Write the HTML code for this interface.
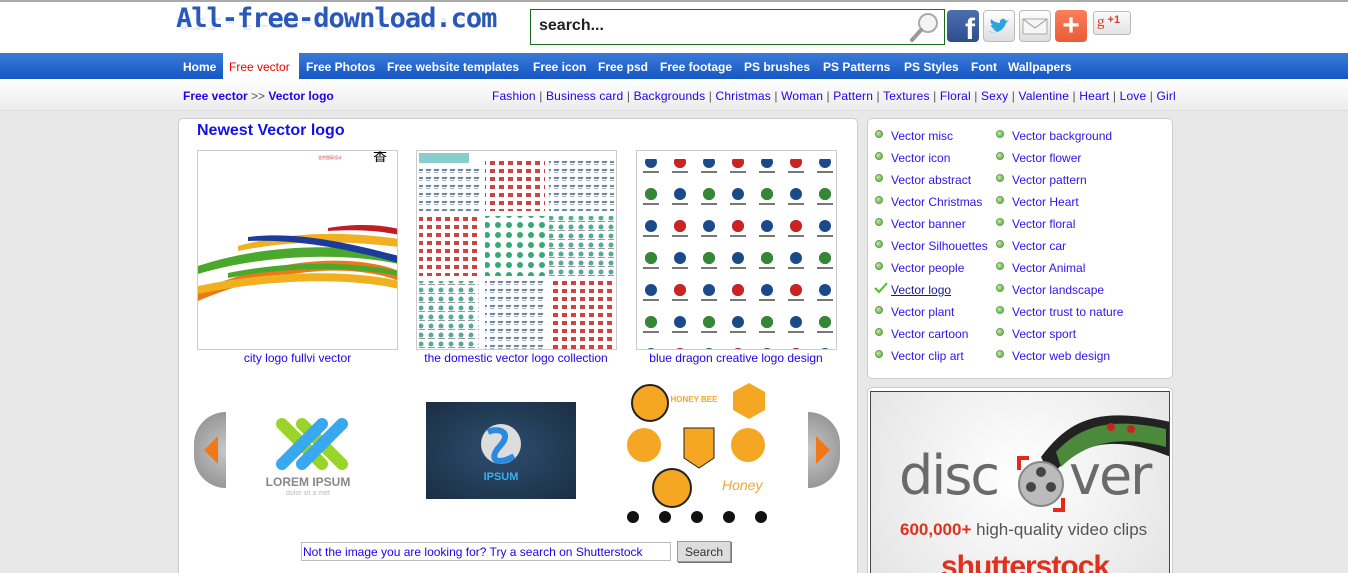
<!DOCTYPE html>
<html style="width:1348px;height:573px;overflow:hidden"><head><meta charset="utf-8">
<style>
*{margin:0;padding:0;box-sizing:border-box}
body{width:1348px;height:573px;overflow:hidden;background:#e8e8e8;font-family:"Liberation Sans",Arial,sans-serif;font-size:12px;position:relative}
.abs{position:absolute}
a{color:#2200ee;text-decoration:none}
#hdr{left:0;top:0;width:1348px;height:53px;background:#fff;border-top:2px solid #aaa}
#logo{left:176px;top:4px;font-family:"DejaVu Sans Mono","Liberation Mono",monospace;font-size:27px;font-weight:bold;color:#2a58b8;letter-spacing:-1px;line-height:30px}
#logo2{left:176px;top:32px;font-family:"DejaVu Sans Mono",monospace;font-size:27px;font-weight:bold;color:#2a58b8;opacity:.12;letter-spacing:-1px;transform:scaleY(-.6);transform-origin:top;line-height:30px}
#search{left:530px;top:9px;width:415px;height:36px;border:1px solid #1a6e1a;background:#fff;font-size:16px;font-weight:bold;color:#222;padding:7px 8px}
#nav{left:0;top:53px;width:1348px;height:26px;background:linear-gradient(#3a7bd8,#1556c4)}
#nav span{position:absolute;top:7px;color:#fff;font-weight:bold;font-size:12px}
#sub{left:0;top:79px;width:1348px;height:32px;background:linear-gradient(#fff,#ececec);border-bottom:1px solid #ddd}
#main{left:178px;top:118px;width:680px;height:470px;background:#fff;border:1px solid #ccc;border-radius:5px}
#side{left:867px;top:118px;width:306px;height:261px;background:#fff;border:1px solid #ccc;border-radius:5px}
#ad{left:867px;top:387px;width:306px;height:200px;background:#fff;border:1px solid #ccc;border-radius:5px}
.it{position:absolute;font-size:12px;color:#3311ee;white-space:nowrap}
.dot{position:absolute;width:8px;height:8px;border-radius:50%;background:radial-gradient(circle at 35% 35%,#bff0a0,#4aa82a);border:1px solid #6a9a5a}
.th{position:absolute;top:150px;width:201px;height:200px;border:1px solid #ccc;background:#fff;overflow:hidden}
.cap{position:absolute;top:351px;font-size:12px;color:#2200ee;text-align:center}
.arr{position:absolute;top:412px;width:32px;height:76px;background:radial-gradient(circle at 100% 50%,#c8c8c8,#888);}
</style></head><body>
<div id="hdr" class="abs"></div>
<div id="logo" class="abs">All-free-download.com</div>
<div id="logo2" class="abs">All-free-download.com</div>
<div id="search" class="abs">search...</div>
<svg class="abs" style="left:908px;top:11px" width="34" height="32"><circle cx="20" cy="12" r="9" fill="#f4f4f4" stroke="#aaa" stroke-width="2"/><line x1="13" y1="19" x2="4" y2="29" stroke="#999" stroke-width="4" stroke-linecap="round"/></svg>
<div class="abs" style="left:947px;top:10px;width:32px;height:32px;border-radius:4px;background:linear-gradient(#4d6fb0,#2d4d8e);color:#fff;font:bold 30px 'Liberation Sans';text-align:right;padding-right:4px;line-height:40px;overflow:hidden">f</div>
<div class="abs" style="left:983px;top:10px;width:32px;height:32px;border-radius:4px;background:linear-gradient(#fff,#ddd);border:1px solid #bbb"><svg width="30" height="30"><path d="M5 20c6 3 14 1 17-8l3-3-3 1c-1-3-5-3-6 0l0 2c-4 0-7-2-9-4-1 3 0 5 2 6l-2 0c0 2 2 4 4 4l-2 0c1 1 2 2 4 2-3 2-6 2-8 0z" fill="#2aa4e0"/></svg></div>
<div class="abs" style="left:1019px;top:10px;width:32px;height:32px;border-radius:4px;background:linear-gradient(#fff,#ddd);border:1px solid #bbb"><svg width="30" height="30"><path d="M3 8h24v15H3z" fill="#f6f6f6" stroke="#aaa"/><path d="M3 8l12 9 12-9" fill="none" stroke="#999"/></svg></div>
<div class="abs" style="left:1055px;top:10px;width:32px;height:32px;border-radius:4px;background:linear-gradient(#f8805a,#ec5a38);color:#fff;font:bold 30px 'Liberation Sans';text-align:center;line-height:31px">+</div>
<div class="abs" style="left:1093px;top:11px;width:38px;height:24px;border-radius:3px;background:linear-gradient(#fafafa,#e4e4e4);border:1px solid #bbb;color:#d04030;font:15px 'Liberation Serif';padding:2px 3px">g<span style="font:bold 11px 'Liberation Sans';vertical-align:3px"> +1</span></div>

<div id="nav" class="abs">
<div class="abs" style="left:223px;top:0;width:76px;height:26px;background:#fff"></div>
<span style="left:183px">Home</span><span style="left:229px;color:#ee0000;font-weight:normal">Free vector</span><span style="left:306px">Free Photos</span><span style="left:387px">Free website templates</span><span style="left:533px">Free icon</span><span style="left:598px">Free psd</span><span style="left:660px">Free footage</span><span style="left:744px">PS brushes</span><span style="left:823px">PS Patterns</span><span style="left:904px">PS Styles</span><span style="left:971px">Font</span><span style="left:1008px">Wallpapers</span>
</div>
<div id="sub" class="abs">
<div class="abs" style="left:183px;top:10px;font-weight:bold;color:#2200ee">Free vector <span style="color:#555;font-weight:normal">&gt;&gt;</span> Vector logo</div>
<div class="abs" style="left:492px;top:10px;color:#2200ee;white-space:nowrap;letter-spacing:.15px">Fashion <span style="color:#555">|</span> Business card <span style="color:#555">|</span> Backgrounds <span style="color:#555">|</span> Christmas <span style="color:#555">|</span> Woman <span style="color:#555">|</span> Pattern <span style="color:#555">|</span> Textures <span style="color:#555">|</span> Floral <span style="color:#555">|</span> Sexy <span style="color:#555">|</span> Valentine <span style="color:#555">|</span> Heart <span style="color:#555">|</span> Love <span style="color:#555">|</span> Girl</div>
</div>

<div id="main" class="abs"></div>
<div class="abs" style="left:197px;top:122px;font:bold 16px 'Liberation Sans';color:#1111ee">Newest Vector logo</div>

<div class="th" style="left:197px"><svg width="201" height="200"><text x="175" y="10" font-size="14">香</text><text x="120" y="8" font-size="4" fill="#c33">北京国际设计</text>
<path d="M0 115 C60 95 140 90 201 105 L201 113 C140 100 60 105 0 123Z" fill="#4aa82c"/>
<path d="M40 95 C100 78 160 82 201 88 L201 96 C150 90 100 88 40 100Z" fill="#f0b020"/>
<path d="M50 86 C100 80 150 92 201 105 L201 112 C150 98 100 88 50 90Z" fill="#1b3c9a"/>
<path d="M130 77 C160 72 185 74 201 78 L201 84 C185 80 160 78 130 80Z" fill="#c21d24"/>
<path d="M0 140 C70 110 150 100 201 120 L201 130 C150 110 70 120 0 150Z" fill="#e87a18"/>
<path d="M0 135 C70 120 150 118 201 130 L201 138 C150 126 70 128 0 143Z" fill="#f0b020"/>
<path d="M30 122 C100 108 160 112 201 120 L201 125 C160 117 100 114 30 127Z" fill="#4aa82c"/></svg></div>
<div class="th" style="left:416px"><svg width="201" height="200">
<defs><pattern id="p1" width="10" height="9" patternUnits="userSpaceOnUse"><circle cx="4" cy="4" r="2.5" fill="#5a9"/><rect x="1" y="7" width="7" height="1" fill="#999"/></pattern>
<pattern id="p2" width="9" height="8" patternUnits="userSpaceOnUse"><rect x="1" y="2" width="5" height="4" fill="#c44"/></pattern>
<pattern id="p3" width="11" height="10" patternUnits="userSpaceOnUse"><circle cx="4" cy="4" r="3" fill="#3a7"/></pattern>
<pattern id="p4" width="8" height="8" patternUnits="userSpaceOnUse"><rect x="1" y="2" width="5" height="2" fill="#68a"/><rect x="1" y="5" width="4" height="1" fill="#aaa"/></pattern></defs>
<rect x="2" y="2" width="50" height="10" fill="#8cc"/>
<rect x="2" y="15" width="60" height="45" fill="url(#p4)"/><rect x="68" y="10" width="60" height="50" fill="url(#p2)"/><rect x="132" y="10" width="65" height="50" fill="url(#p4)"/>
<rect x="2" y="65" width="60" height="60" fill="url(#p2)"/><rect x="68" y="65" width="60" height="60" fill="url(#p3)"/><rect x="132" y="65" width="65" height="60" fill="url(#p1)"/>
<rect x="2" y="130" width="60" height="68" fill="url(#p1)"/><rect x="68" y="130" width="60" height="68" fill="url(#p4)"/><rect x="132" y="130" width="65" height="68" fill="url(#p2)"/></svg></div>
<div class="th" style="left:636px"><svg width="201" height="200">
<defs><pattern id="p5" width="29" height="32" patternUnits="userSpaceOnUse"><circle cx="14" cy="11" r="6" fill="#1a4a8a"/><rect x="6" y="20" width="16" height="2" fill="#777"/></pattern>
<pattern id="p6" width="58" height="64" patternUnits="userSpaceOnUse"><circle cx="43" cy="11" r="6" fill="#c22"/><circle cx="14" cy="43" r="6" fill="#383"/></pattern></defs>
<rect x="0" y="8" width="201" height="190" fill="url(#p5)"/><rect x="0" y="8" width="201" height="190" fill="url(#p6)"/></svg></div>
<div class="cap" style="left:197px;width:201px">city logo fullvi vector</div>
<div class="cap" style="left:406px;width:220px">the domestic vector logo collection</div>
<div class="cap" style="left:626px;width:220px">blue dragon creative logo design</div>

<div class="arr" style="left:194px;border-radius:38px 0 0 38px"><svg width="32" height="76"><path d="M10 38L24 24V52Z" fill="#f07818"/></svg></div>
<div class="arr" style="left:808px;border-radius:0 38px 38px 0;background:radial-gradient(circle at 0 50%,#c8c8c8,#888)"><svg width="32" height="76"><path d="M22 38L8 24V52Z" fill="#f07818"/></svg></div>

<svg class="abs" style="left:262px;top:404px" width="92" height="95"><path d="M20 20l40 40M40 20l40 40" stroke="#9ad42a" stroke-width="12" stroke-linecap="round" fill="none"/><path d="M80 20L40 60M60 20L20 60" stroke="#38a8f0" stroke-width="12" stroke-linecap="round" fill="none"/><text x="46" y="82" text-anchor="middle" font-size="12" font-weight="bold" fill="#888">LOREM IPSUM</text><text x="46" y="91" text-anchor="middle" font-size="7" fill="#bbb">dolor sit a met</text></svg>
<div class="abs" style="left:426px;top:402px;width:150px;height:97px;background:radial-gradient(#2d4e6e,#1a2e44)"><svg width="150" height="97"><circle cx="75" cy="42" r="20" fill="#ddd"/><path d="M62 30c10-5 25 0 12 14s-2 20 14 10" stroke="#2a8ae0" stroke-width="6" fill="none"/><text x="75" y="78" text-anchor="middle" font-size="11" font-weight="bold" fill="#3ab0f0">IPSUM</text></svg></div>
<svg class="abs" style="left:622px;top:378px" width="150" height="150">
<circle cx="28" cy="25" r="18" fill="#f5a623" stroke="#222" stroke-width="2"/><circle cx="72" cy="20" r="12" fill="#fff"/><text x="72" y="24" text-anchor="middle" font-size="8" font-weight="bold" fill="#f5a623">HONEY BEE</text><polygon points="127,5 143,14 143,32 127,41 111,32 111,14" fill="#f5a623"/>
<circle cx="22" cy="67" r="17" fill="#f5a623"/><polygon points="62,50 92,50 92,80 77,90 62,80" fill="#f5a623" stroke="#222"/><circle cx="126" cy="67" r="17" fill="#f5a623"/>
<circle cx="50" cy="110" r="19" fill="#f5a623" stroke="#222" stroke-width="2"/><text x="100" y="112" font-size="14" fill="#f5a623" font-style="italic">Honey</text>
<g fill="#111"><circle cx="11" cy="139" r="6"/><circle cx="43" cy="139" r="6"/><circle cx="75" cy="139" r="6"/><circle cx="107" cy="139" r="6"/><circle cx="139" cy="139" r="6"/></g></svg>

<div class="abs" style="left:301px;top:542px;width:370px;height:19px;border:1px solid #bbb;color:#2200ee;padding:2px 1px;font-size:12px">Not the image you are looking for? Try a search on Shutterstock</div>
<div class="abs" style="left:677px;top:541px;width:54px;height:21px;border:1px solid #999;background:#ddd;color:#333;text-align:center;padding-top:3px;box-shadow:1px 1px #777">Search</div>

<div id="side" class="abs"></div>
<div class="abs" style="left:875px;top:130px">
<div class="dot" style="left:0;top:0"></div><a class="it" style="left:16px;top:-1px">Vector misc</a>
<div class="dot" style="left:0;top:22px"></div><a class="it" style="left:16px;top:21px">Vector icon</a>
<div class="dot" style="left:0;top:44px"></div><a class="it" style="left:16px;top:43px">Vector abstract</a>
<div class="dot" style="left:0;top:66px"></div><a class="it" style="left:16px;top:65px">Vector Christmas</a>
<div class="dot" style="left:0;top:88px"></div><a class="it" style="left:16px;top:87px">Vector banner</a>
<div class="dot" style="left:0;top:110px"></div><a class="it" style="left:16px;top:109px">Vector Silhouettes</a>
<div class="dot" style="left:0;top:132px"></div><a class="it" style="left:16px;top:131px">Vector people</a>
<svg class="abs" style="left:-1px;top:152px" width="14" height="12"><path d="M1 6l4 4 8-9" stroke="#4ac02a" stroke-width="2" fill="none"/></svg><a class="it" style="left:16px;top:153px;color:#1a1aa0;text-decoration:underline">Vector logo</a>
<div class="dot" style="left:0;top:176px"></div><a class="it" style="left:16px;top:175px">Vector plant</a>
<div class="dot" style="left:0;top:198px"></div><a class="it" style="left:16px;top:197px">Vector cartoon</a>
<div class="dot" style="left:0;top:220px"></div><a class="it" style="left:16px;top:219px">Vector clip art</a>
</div>
<div class="abs" style="left:996px;top:130px">
<div class="dot" style="left:0;top:0"></div><a class="it" style="left:16px;top:-1px">Vector background</a>
<div class="dot" style="left:0;top:22px"></div><a class="it" style="left:16px;top:21px">Vector flower</a>
<div class="dot" style="left:0;top:44px"></div><a class="it" style="left:16px;top:43px">Vector pattern</a>
<div class="dot" style="left:0;top:66px"></div><a class="it" style="left:16px;top:65px">Vector Heart</a>
<div class="dot" style="left:0;top:88px"></div><a class="it" style="left:16px;top:87px">Vector floral</a>
<div class="dot" style="left:0;top:110px"></div><a class="it" style="left:16px;top:109px">Vector car</a>
<div class="dot" style="left:0;top:132px"></div><a class="it" style="left:16px;top:131px">Vector Animal</a>
<div class="dot" style="left:0;top:154px"></div><a class="it" style="left:16px;top:153px">Vector landscape</a>
<div class="dot" style="left:0;top:176px"></div><a class="it" style="left:16px;top:175px">Vector trust to nature</a>
<div class="dot" style="left:0;top:198px"></div><a class="it" style="left:16px;top:197px">Vector sport</a>
<div class="dot" style="left:0;top:220px"></div><a class="it" style="left:16px;top:219px">Vector web design</a>
</div>

<div id="ad" class="abs"></div>
<div class="abs" style="left:870px;top:391px;width:300px;height:190px;border:1px solid #444;background:radial-gradient(circle at 50% 45%,#fff,#e4e4e4);overflow:hidden">
<svg class="abs" style="left:170px;top:5px" width="130" height="80"><path d="M0 60 C30 20 60 10 130 25 L130 60 C80 40 40 40 10 80Z" fill="#222"/><path d="M15 55 C40 28 70 20 125 32 L125 50 C80 38 45 45 20 70Z" fill="#4a8a3a"/><circle cx="70" cy="30" r="4" fill="#c22"/><circle cx="90" cy="32" r="4" fill="#c22"/></svg>
<div class="abs" style="left:28px;top:52px;font:54px 'DejaVu Sans','Liberation Sans',sans-serif;color:#6a6a6a;letter-spacing:-2px">disc</div>
<div class="abs" style="left:198px;top:52px;font:54px 'DejaVu Sans','Liberation Sans',sans-serif;color:#6a6a6a;letter-spacing:-2px">ver</div>
<svg class="abs" style="left:140px;top:60px" width="60" height="70"><circle cx="30" cy="32" r="22" fill="#bbb" stroke="#888" stroke-width="2"/><g fill="#444"><circle cx="30" cy="20" r="5"/><circle cx="20" cy="35" r="5"/><circle cx="40" cy="35" r="5"/></g><path d="M8 18V6h10M52 46v12H42" stroke="#e02a1a" stroke-width="4" fill="none"/></svg>
<div class="abs" style="left:29px;top:128px;font-size:17px;color:#555;white-space:nowrap"><b style="color:#e0301e">600,000+</b> high-quality video clips</div>
<div class="abs" style="left:70px;top:158px;font:bold 30px 'Liberation Sans';color:#e0301e;letter-spacing:-1px">shutterst<span>o</span>ck</div>
</div>
</body></html>
